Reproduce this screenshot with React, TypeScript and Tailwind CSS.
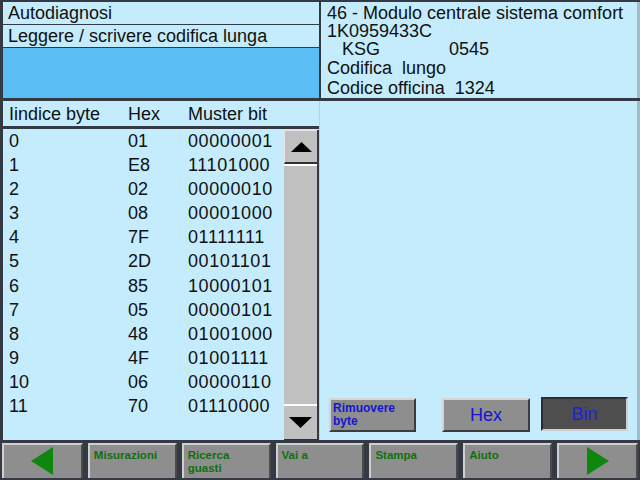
import React from "react";

const rows: [string, string, string][] = [
  ["0", "01", "00000001"],
  ["1", "E8", "11101000"],
  ["2", "02", "00000010"],
  ["3", "08", "00001000"],
  ["4", "7F", "01111111"],
  ["5", "2D", "00101101"],
  ["6", "85", "10000101"],
  ["7", "05", "00000101"],
  ["8", "48", "01001000"],
  ["9", "4F", "01001111"],
  ["10", "06", "00000110"],
  ["11", "70", "01110000"],
];

function NavButton({ children }: { children?: React.ReactNode }) {
  return (
    <div className="flex-1 h-full bg-[#8e8e8e] border-t-2 border-l-2 border-t-[#cfcfcf] border-l-[#cfcfcf] border-r-2 border-r-[#4a4a4a] px-[4px] pt-[4px] text-[11.5px] leading-[13px] font-bold text-[#0f700f]">
      {children}
    </div>
  );
}

function ArrowButton({ dir }: { dir: "left" | "right" }) {
  return (
    <div className="flex-1 h-full bg-[#8e8e8e] border-t-2 border-l-2 border-t-[#cfcfcf] border-l-[#cfcfcf] border-r-2 border-r-[#4a4a4a] flex items-start justify-center pt-[2px]">
      <svg width="22" height="28" viewBox="0 0 22 28">
        {dir === "left" ? (
          <polygon points="22,0 0,14 22,28" fill="#0f860f" />
        ) : (
          <polygon points="0,0 22,14 0,28" fill="#0f860f" />
        )}
      </svg>
    </div>
  );
}

export default function App() {
  return (
    <div
      className="w-[640px] h-[480px] bg-[#343a44] flex flex-col text-[#111] overflow-hidden"
      style={{ fontFamily: '"Liberation Sans", Arial, sans-serif' }}
    >
      {/* main area */}
      <div className="h-[441px] flex flex-col pt-[2px] pl-[3px]">
        {/* top section */}
        <div className="h-[96px] flex gap-[2px]">
          <div className="w-[316px] flex flex-col">
            <div className="h-[23px] bg-[#c4ecfc] border-b border-[#343a44] px-[5px] text-[18px] leading-[22px]">
              Autodiagnosi
            </div>
            <div className="h-[23px] bg-[#c4ecfc] border-b border-[#343a44] px-[5px] text-[18px] leading-[22px]">
              Leggere / scrivere codifica lunga
            </div>
            <div className="flex-1 bg-[#5cbcf4]" />
          </div>
          <div className="flex-1 bg-[#c4ecfc] border-r-[3px] border-[#a4bcc6] px-[6px] pt-[2px] text-[18px]">
            <div className="h-[18px] leading-[18px]">46 - Modulo centrale sistema comfort</div>
            <div className="h-[18px] leading-[18px]">1K0959433C</div>
            <div className="h-[18px] leading-[18px] flex">
              <span className="w-[122px] pl-[15px]">KSG</span>
              <span>0545</span>
            </div>
            <div className="h-[20px] leading-[20px] whitespace-pre">Codifica  lungo</div>
            <div className="h-[20px] leading-[20px] whitespace-pre">Codice officina  1324</div>
          </div>
        </div>

        {/* lower section */}
        <div className="flex-1 mt-[3px] flex bg-[#c4ecfc] border-r-[3px] border-[#a4bcc6]">
          <div className="w-[316px] flex flex-col">
            <div className="h-[28px] border-b-[3px] border-[#343a44] flex text-[18px] leading-[23px] pt-[2px] pl-[6px]">
              <span className="w-[119px]">Iindice byte</span>
              <span className="w-[60px]">Hex</span>
              <span>Muster bit</span>
            </div>
            <div className="flex-1 flex pt-[1px]">
              <div className="flex-1 flex flex-col pl-[6px]">
                {rows.map(([i, h, b]) => (
                  <div key={i} className="h-[24.1px] flex text-[18px] leading-[22px]">
                    <span className="w-[119px]">{i}</span>
                    <span className="w-[60px]">{h}</span>
                    <span className="tracking-[0.6px]">{b}</span>
                  </div>
                ))}
              </div>
              {/* scrollbar */}
              <div className="w-[35px] flex flex-col bg-[#c0c0c0] border-r-2 border-[#343a44]">
                <div className="h-[34px] border-t border-l border-[#e4e4e4] border-b-2 border-b-[#303030] flex items-center justify-center">
                  <svg width="21" height="10" viewBox="0 0 21 10">
                    <polygon points="10.5,0 21,10 0,10" fill="#000" />
                  </svg>
                </div>
                <div className="flex-1 border-t-2 border-white" />
                <div className="h-[36px] border-t-2 border-white border-b border-b-[#303030] flex items-center justify-center">
                  <svg width="23" height="11" viewBox="0 0 23 11">
                    <polygon points="0,0 23,0 11.5,11" fill="#000" />
                  </svg>
                </div>
              </div>
            </div>
          </div>
          <div className="w-[1px] bg-[#a8d6ea]" />
          <div className="flex-1 flex items-end pb-[8px] pl-[9px] pr-[6px]">
            <div className="w-[87px] h-[34px] bg-[#8e8e8e] border-t-2 border-l-2 border-t-[#d4d4d4] border-l-[#d4d4d4] border-r-2 border-b-2 border-r-[#3c3c3c] border-b-[#3c3c3c] px-[2px] pt-[2px] text-[12px] leading-[13px] font-bold text-[#1616d0]">
              Rimuovere
              <br />
              byte
            </div>
            <div className="w-[88px] h-[34px] ml-[26px] bg-[#8e8e8e] border-t-2 border-l-2 border-t-[#d4d4d4] border-l-[#d4d4d4] border-r-2 border-b-2 border-r-[#3c3c3c] border-b-[#3c3c3c] flex items-center justify-center text-[18px] text-[#1616d0]">
              Hex
            </div>
            <div className="w-[87px] h-[34px] ml-[11px] mb-[1px] bg-[#4e4e4e] border-t-2 border-l-2 border-t-[#2c2c2c] border-l-[#2c2c2c] border-r-2 border-b-2 border-r-[#cfcfcf] border-b-[#cfcfcf] flex items-center justify-center text-[18px] text-[#2020e0]">
              Bin
            </div>
          </div>
        </div>
      </div>

      {/* bottom navigation bar */}
      <div className="h-[37px] mt-[3px] flex gap-[5px] px-[2px] pb-[2px]">
        <ArrowButton dir="left" />
        <NavButton>Misurazioni</NavButton>
        <NavButton>
          Ricerca
          <br />
          guasti
        </NavButton>
        <NavButton>Vai a</NavButton>
        <NavButton>Stampa</NavButton>
        <NavButton>Aiuto</NavButton>
        <ArrowButton dir="right" />
      </div>
    </div>
  );
}
